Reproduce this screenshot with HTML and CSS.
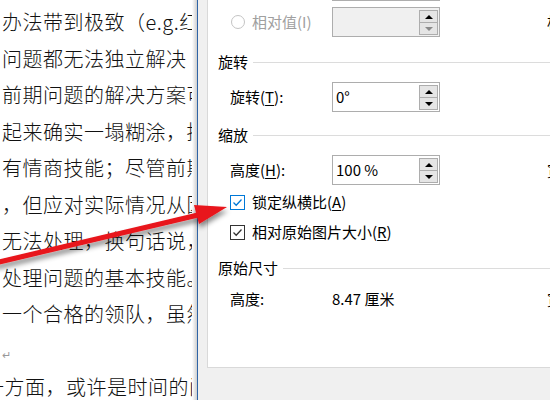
FILE: index.html
```html
<!DOCTYPE html>
<html lang="zh-CN">
<head>
<meta charset="utf-8">
<title>布局 - 大小</title>
<link rel="stylesheet" href="styles.css">
</head>
<body>
<div class="screen">
  <div class="doc">
    <p class="ln">办法带到极致（e.g.红</p>
    <p class="ln">问题都无法独立解决</p>
    <p class="ln">前期问题的解决方案可</p>
    <p class="ln">起来确实一塌糊涂，据</p>
    <p class="ln">有情商技能；尽管前期</p>
    <p class="ln">，但应对实际情况从因</p>
    <p class="ln">无法处理，换句话说，</p>
    <p class="ln">处理问题的基本技能。</p>
    <p class="ln">一个合格的领队，虽然</p>
    <p class="ln"><span class="para">↵</span></p>
    <p class="ln shift">一方面，或许是时间的问</p>
  </div>
  <div class="doc-shadow"></div>
  <div class="doc-edge"></div>
  <div class="dlg">
    <div class="panel">
      <div class="prev-edge"></div>

      <div class="row m6">
        <div class="lab"><span class="radio"></span><span class="dis">相对值(I)</span></div>
        <div class="spin off">
          <span class="val"></span>
          <div class="btns"><span class="b"><i class="up"></i></span><span class="b"><i class="down gray"></i></span></div>
        </div>
        <div class="side">相对于(E)</div>
      </div>

      <div class="hdr m15"><span>旋转</span><span class="rule"></span></div>

      <div class="row m10">
        <div class="lab">旋转(<u>T</u>):</div>
        <div class="spin">
          <span class="val">0°</span>
          <div class="btns"><span class="b"><i class="up"></i></span><span class="b"><i class="down"></i></span></div>
        </div>
      </div>

      <div class="hdr m13"><span>缩放</span><span class="rule"></span></div>

      <div class="row m10">
        <div class="lab">高度(<u>H</u>):</div>
        <div class="spin">
          <span class="val">100 %</span>
          <div class="btns"><span class="b"><i class="up"></i></span><span class="b"><i class="down"></i></span></div>
        </div>
        <div class="side">宽度(W):</div>
      </div>

      <div class="check m7">
        <span class="box focus"><svg viewBox="0 0 13 13" width="13" height="13"><polyline points="2.5,6.5 5.2,9.2 10.5,3.5" fill="none" stroke="#0078d7" stroke-width="1.3"/></svg></span>
        <span>锁定纵横比(<u>A</u>)</span>
      </div>

      <div class="check m10">
        <span class="box"><svg viewBox="0 0 13 13" width="13" height="13"><polyline points="2.5,6.5 5.2,9.2 10.5,3.5" fill="none" stroke="#333" stroke-width="1.3"/></svg></span>
        <span>相对原始图片大小(<u>R</u>)</span>
      </div>

      <div class="hdr m16"><span>原始尺寸</span><span class="rule"></span></div>

      <div class="row short m11">
        <div class="lab">高度:</div>
        <div class="plain">8.47 厘米</div>
        <div class="side">宽度:</div>
      </div>
    </div>
  </div>

  <svg class="arrow" width="550" height="400" viewBox="0 0 550 400">
    <defs>
      <filter id="sh" x="-10%" y="-50%" width="130%" height="250%">
        <feDropShadow dx="1" dy="4" stdDeviation="2.5" flood-color="#000" flood-opacity="0.45"/>
      </filter>
    </defs>
    <g filter="url(#sh)">
      <line x1="-5" y1="263" x2="198" y2="215" stroke="#e8141b" stroke-width="5"/>
      <polygon points="227,207 194,205 199,224" fill="#e8141b"/>
    </g>
  </svg>
</div>
</body>
</html>
```

FILE: styles.css
```css
* { box-sizing: border-box; }
html, body {
  margin: 0;
  padding: 0;
  width: 550px;
  height: 400px;
  overflow: hidden;
  background: #fff;
}
.screen {
  position: relative;
  display: flex;
  width: 550px;
  height: 400px;
  overflow: hidden;
}

/* document */
.doc {
  width: 192px;
  flex: none;
  background: #fff;
  overflow: hidden;
  padding-top: 4px;
  font-family: "Noto Sans CJK SC", "Noto Sans", sans-serif;
  font-size: 20px;
  font-weight: 300;
  color: #111;
}
.ln {
  margin: 0;
  height: 36.5px;
  line-height: 36.5px;
  white-space: nowrap;
  padding-left: 2px;
  letter-spacing: 0.5px;
}
.ln.shift { margin-left: -18px; }
.para {
  font-size: 11px;
  color: #999;
  font-family: "DejaVu Sans", sans-serif;
}
.doc-shadow {
  width: 5px;
  flex: none;
  background: linear-gradient(to right, #ffffff, #cfcfcf);
}
.doc-edge {
  width: 1px;
  flex: none;
  background: #2f64a6;
}

/* dialog */
.dlg {
  flex: 1;
  min-width: 0;
  background: #f0f0f0;
  padding-left: 9px;
  overflow: hidden;
  font-family: "Noto Sans CJK SC", "Noto Sans", sans-serif;
  font-size: 15px;
  color: #000;
}
.panel {
  width: 420px;
  height: 368px;
  background: #fff;
  border-left: 1px solid #d9d9d9;
  border-bottom: 1px solid #d9d9d9;
  padding-left: 10px;
  display: flex;
  flex-direction: column;
}
.prev-edge {
  margin-left: 114px;
  width: 108px;
  height: 1px;
  background: #adadad;
  flex: none;
}
.m6 { margin-top: 6px; }
.m7 { margin-top: 7px; }
.m10 { margin-top: 10px; }
.m11 { margin-top: 11px; }
.m13 { margin-top: 13px; }
.m15 { margin-top: 15px; }
.m16 { margin-top: 16px; }

.row {
  display: flex;
  align-items: center;
  height: 30px;
  padding-left: 12px;
  flex: none;
  white-space: nowrap;
}
.row.short { height: 20px; }
.lab {
  width: 102px;
  flex: none;
  display: flex;
  align-items: center;
  line-height: 20px;
}
.radio {
  width: 14px;
  height: 14px;
  border: 1px solid #c4c4c4;
  border-radius: 50%;
  margin-left: 1px;
  margin-right: 7px;
  background: #fff;
  flex: none;
}
.dis { color: #a0a0a0; }
.side {
  margin-left: 107px;
  line-height: 20px;
}
.plain { line-height: 20px; width: 108px; }

.spin {
  width: 108px;
  height: 30px;
  flex: none;
  border: 1px solid #adadad;
  background: #fff;
  display: flex;
  align-items: stretch;
}
.spin.off { background: #f0f0f0; }
.val {
  flex: 1;
  padding-left: 3px;
  line-height: 27px;
}
.btns {
  width: 19px;
  margin: 2px 1px 1px 0;
  display: flex;
  flex-direction: column;
  gap: 0;
}
.b {
  flex: 1;
  border: 1px solid #adadad;
  background: #e5e5e5;
  display: flex;
  align-items: center;
  justify-content: center;
}
.b + .b { border-top: none; margin-top: 0; }
.up, .down {
  width: 0;
  height: 0;
  border-left: 4px solid transparent;
  border-right: 4px solid transparent;
}
.up { border-bottom: 4px solid #000; }
.down { border-top: 4px solid #000; }
.down.gray { border-top-color: #8a8a8a; }

.hdr {
  display: flex;
  align-items: center;
  height: 20px;
  line-height: 20px;
  flex: none;
  white-space: nowrap;
}
.rule {
  flex: 1;
  height: 1px;
  background: #dcdcdc;
  margin-left: 5px;
}

.check {
  display: flex;
  align-items: center;
  height: 20px;
  line-height: 20px;
  padding-left: 12px;
  flex: none;
  white-space: nowrap;
}
.box {
  width: 15px;
  height: 15px;
  border: 1px solid #333;
  background: #fff;
  margin-right: 7px;
  display: flex;
  align-items: center;
  justify-content: center;
  flex: none;
}
.box.focus { border-color: #0078d7; }
.box svg { display: block; }

u { text-decoration-thickness: 1px; text-underline-offset: 2px; }

.arrow {
  position: absolute;
  left: 0;
  top: 0;
  pointer-events: none;
}
```
